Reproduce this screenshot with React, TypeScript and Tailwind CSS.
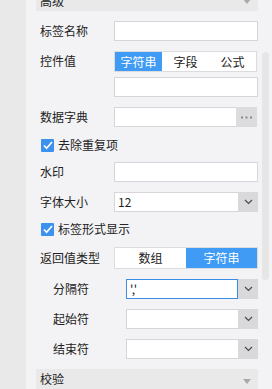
import type { ReactNode } from "react";

const font = { fontFamily: '"Noto Sans CJK SC", "Noto Sans", sans-serif' };

function Chevron() {
  return (
    <svg width="9" height="6" viewBox="0 0 9 6" fill="none">
      <path d="M1 1l3.5 3.5L8 1" stroke="#4a4a4a" strokeWidth="1.2" />
    </svg>
  );
}

function Triangle() {
  return (
    <svg width="8" height="5" viewBox="0 0 8 5">
      <path d="M0 0h8L4 5z" fill="#a9a9ab" />
    </svg>
  );
}

function Dots() {
  return (
    <svg width="11" height="3" viewBox="0 0 11 3">
      <rect x="0" y="0.5" width="2" height="2" fill="#8a8a8c" />
      <rect x="4.5" y="0.5" width="2" height="2" fill="#8a8a8c" />
      <rect x="9" y="0.5" width="2" height="2" fill="#8a8a8c" />
    </svg>
  );
}

function Check() {
  return (
    <span className="w-[13px] h-[13px] bg-[#3c92ee] rounded-[1px] flex items-center justify-center">
      <svg width="10" height="9" viewBox="0 0 10 9" fill="none">
        <path d="M1 4.5l2.6 2.8L9 1" stroke="#fff" strokeWidth="1.7" />
      </svg>
    </span>
  );
}

function Row({ label, indent, children, top }: { label: string; indent?: boolean; children: ReactNode; top?: boolean }) {
  return (
    <div className={`flex ${top ? "items-start" : "items-center"}`}>
      <div className={`${indent ? "w-[90px] pl-[17px]" : "w-[78px] pl-[4px]"} shrink-0 text-[12px] leading-[16px] text-[#222] ${top ? "pt-[2px]" : ""}`}>
        {label}
      </div>
      <div className="flex-1 flex flex-col gap-[5px]">{children}</div>
    </div>
  );
}

function Input({ value, focus }: { value?: string; focus?: boolean }) {
  return (
    <div
      className={`h-[20px] bg-white border ${focus ? "border-[#3a8ee6]" : "border-[#d6d6da]"} text-[12px] leading-[18px] px-[3px] text-[#222]`}
    >
      {value}
    </div>
  );
}

function Select({ value, focus }: { value?: string; focus?: boolean }) {
  return (
    <div className="h-[20px] flex">
      <div
        className={`flex-1 bg-white border ${focus ? "border-[#3a8ee6]" : "border-[#d6d6da] border-r-0"} text-[12px] leading-[18px] px-[3px] text-[#222]`}
      >
        {value}
      </div>
      <div className="w-[20px] bg-[#d9d9dc] flex items-center justify-center">
        <Chevron />
      </div>
    </div>
  );
}

function Segmented({ items, active, h }: { items: string[]; active: number; h: string }) {
  return (
    <div className={`${h} flex border border-[#dcdcdf] bg-white`}>
      {items.map((it, i) => (
        <div
          key={it}
          className={`flex-1 flex items-center justify-center text-[12px] ${i === active ? "bg-[#3f9bf4] text-white" : "text-[#222]"}`}
        >
          {it}
        </div>
      ))}
    </div>
  );
}

function CheckRow({ label }: { label: string }) {
  return (
    <div className="h-[16px] flex items-center gap-[4px] pl-[5px] text-[12px] leading-[16px] text-[#222]">
      <Check />
      <span>{label}</span>
    </div>
  );
}

export default function App() {
  return (
    <div className="w-[272px] h-[389px] flex overflow-hidden bg-[#f3f3f5]" style={font}>
      <div className="w-[26px] shrink-0 bg-[#e9e9ea]" />
      <div className="flex-1 relative pl-[10px] pr-[14px]">
        <div className="mt-[-9px] h-[20px] bg-[#e9e9ea] flex items-center justify-between pl-[4px] pr-[7px] text-[12px] text-[#222]">
          <span>高级</span>
          <Triangle />
        </div>

        <div className="mt-[10px] flex flex-col">
          <Row label="标签名称">
            <Input />
          </Row>
          <div className="mt-[10px]">
            <Row label="控件值" top>
              <div className="mr-[1px]">
                <Segmented items={["字符串", "字段", "公式"]} active={0} h="h-[21px]" />
              </div>
              <Input />
            </Row>
          </div>
          <div className="mt-[10px]">
            <Row label="数据字典">
              <div className="h-[20px] flex mr-[1px]">
                <div className="flex-1 bg-white border border-[#d6d6da] border-r-0" />
                <div className="w-[21px] bg-[#dcdcde] flex items-center justify-center">
                  <Dots />
                </div>
              </div>
            </Row>
          </div>
          <div className="mt-[10px]">
            <CheckRow label="去除重复项" />
          </div>
          <div className="mt-[9px]">
            <Row label="水印">
              <Input />
            </Row>
          </div>
          <div className="mt-[10px]">
            <Row label="字体大小">
              <Select value="12" />
            </Row>
          </div>
          <div className="mt-[9px]">
            <CheckRow label="标签形式显示" />
          </div>
          <div className="mt-[10px]">
            <Row label="返回值类型">
              <Segmented items={["数组", "字符串"]} active={1} h="h-[22px]" />
            </Row>
          </div>
          <div className="mt-[10px] flex flex-col gap-[10px]">
            <Row label="分隔符" indent>
              <Select value="','" focus />
            </Row>
            <Row label="起始符" indent>
              <Select />
            </Row>
            <Row label="结束符" indent>
              <Select />
            </Row>
          </div>
          <div className="mt-[10px] h-[20px] bg-[#e9e9ea] flex items-center justify-between pl-[4px] pr-[7px] text-[12px] text-[#222]">
            <span>校验</span>
            <span className="pt-[4px]">
              <Triangle />
            </span>
          </div>
        </div>

        <div className="absolute right-[3px] top-[52px] w-[7px] h-[228px] rounded-[4px] bg-[#e6e6e7]" />
      </div>
    </div>
  );
}
